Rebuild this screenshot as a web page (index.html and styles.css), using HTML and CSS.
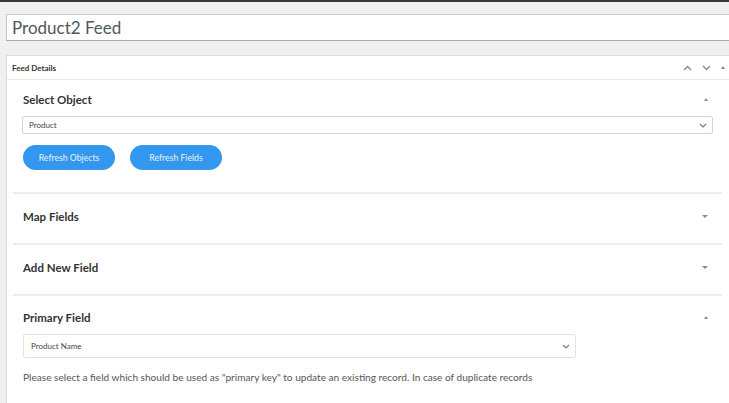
FILE: index.html
```html
<!DOCTYPE html>
<html lang="en">
<head>
    <meta charset="UTF-8">
    <meta name="viewport" content="width=device-width, initial-scale=1.0">
    <title>Product2 Feed</title>
    <link rel="stylesheet" href="styles.css">
</head>
<body>
    <div class="topbar"></div>
    <div class="wrap">
        <div class="title-box">Product2 Feed</div>

        <div class="panel">
            <div class="panel-head">
                <span class="panel-title">Feed Details</span>
                <span class="panel-tools">
                    <svg width="9" height="6" viewBox="0 0 9 6"><path d="M1 5 L4.5 1.5 L8 5" fill="none" stroke="#888" stroke-width="1.3"/></svg>
                    <svg width="9" height="6" viewBox="0 0 9 6"><path d="M1 1 L4.5 4.5 L8 1" fill="none" stroke="#888" stroke-width="1.3"/></svg>
                    <span class="tri-up"></span>
                </span>
            </div>

            <div class="panel-body">
                <div class="section">
                    <div class="section-head">
                        <span class="section-title">Select Object</span>
                        <span class="tri-up"></span>
                    </div>
                    <div class="select select-full">
                        <span>Product</span>
                        <svg width="8" height="5" viewBox="0 0 8 5"><path d="M1 1 L4 4 L7 1" fill="none" stroke="#777" stroke-width="1.1"/></svg>
                    </div>
                    <div class="buttons">
                        <button type="button" class="btn">Refresh Objects</button>
                        <button type="button" class="btn">Refresh Fields</button>
                    </div>
                </div>

                <div class="section section-closed">
                    <div class="section-head">
                        <span class="section-title">Map Fields</span>
                        <span class="tri-down"></span>
                    </div>
                </div>

                <div class="section section-closed">
                    <div class="section-head">
                        <span class="section-title">Add New Field</span>
                        <span class="tri-down"></span>
                    </div>
                </div>

                <div class="section section-last">
                    <div class="section-head">
                        <span class="section-title">Primary Field</span>
                        <span class="tri-up"></span>
                    </div>
                    <div class="select select-primary">
                        <span>Product Name</span>
                        <svg width="8" height="5" viewBox="0 0 8 5"><path d="M1 1 L4 4 L7 1" fill="none" stroke="#777" stroke-width="1.1"/></svg>
                    </div>
                    <p class="help">Please select a field which should be used as "primary key" to update an existing record. In case of duplicate records</p>
                </div>
            </div>
        </div>
    </div>
</body>
</html>
```

FILE: styles.css
```css
/* page */
body {
    font-family: Lato, "Open Sans", Arial, sans-serif;
    margin: 0;
    background: #f0f0f1;
    color: #3c434a;
    overflow: hidden;
}
.topbar {
    height: 2px;
    background: #3a3a3a;
}
.wrap {
    padding: 12px 0 0 6px;
    width: 740px;
}

/* title */
.title-box {
    height: 27px;
    box-sizing: border-box;
    background: #fff;
    border: 1px solid #c8c8c8;
    border-bottom-color: #a9a9a9;
    padding: 0 5px;
    font-size: 17px;
    line-height: 25px;
    color: #50575e;
}

/* panel */
.panel {
    margin-top: 14px;
    width: 731px;
    background: #fff;
    border: 1px solid #dcdcde;
    box-sizing: border-box;
}
.panel-head {
    height: 23px;
    display: flex;
    align-items: center;
    justify-content: space-between;
    padding: 0 11px 0 5px;
    border-bottom: 1px solid #e6e6e6;
}
.panel-title {
    font-size: 8px;
    font-weight: bold;
    color: #333;
}
.panel-tools {
    display: flex;
    align-items: center;
    gap: 10px;
}
.tri-up {
    width: 0;
    height: 0;
    border-left: 2.5px solid transparent;
    border-right: 2.5px solid transparent;
    border-bottom: 3px solid #8a8a8a;
}
.tri-down {
    width: 0;
    height: 0;
    border-left: 3px solid transparent;
    border-right: 3px solid transparent;
    border-top: 3px solid #8a8a8a;
}
.panel-body {
    padding: 0 14px 0 6px;
}

/* sections */
.section {
    padding: 11px 9px 22px 10px;
    border-bottom: 2px solid #ececec;
}
.section-closed {
    padding: 14px 14px 19px 10px;
}
.section-last {
    padding: 13px 14px 20px 10px;
    border-bottom: none;
}
.section-head {
    display: flex;
    align-items: center;
    justify-content: space-between;
    height: 16px;
    padding-right: 5px;
}
.section-closed .section-head,
.section-last .section-head {
    padding-right: 0;
}
.section-title {
    font-size: 11.5px;
    font-weight: bold;
    color: #333;
}

/* selects */
.select {
    display: flex;
    align-items: center;
    justify-content: space-between;
    box-sizing: border-box;
    border: 1px solid #d4d4d4;
    border-radius: 2px;
    background: #fff;
    font-size: 8px;
    color: #444;
}
.select-full {
    margin: 9px 0 0 -1px;
    height: 18px;
    padding: 0 5px 0 6px;
}
.select-primary {
    margin-top: 9px;
    width: 553px;
    height: 24px;
    padding: 0 5px 0 7px;
    border-color: #e2e2e2;
}

/* buttons */
.buttons {
    display: flex;
    gap: 15px;
    margin-top: 11px;
}
.btn {
    height: 25px;
    width: 92px;
    border: none;
    border-radius: 13px;
    background: #3397ef;
    color: #e8f2fd;
    font-family: Lato, Arial, sans-serif;
    font-size: 8.7px;
    cursor: pointer;
    padding: 0;
}

.help {
    margin: 12px 0 0;
    font-size: 10.1px;
    line-height: 14px;
    color: #555;
}
```
